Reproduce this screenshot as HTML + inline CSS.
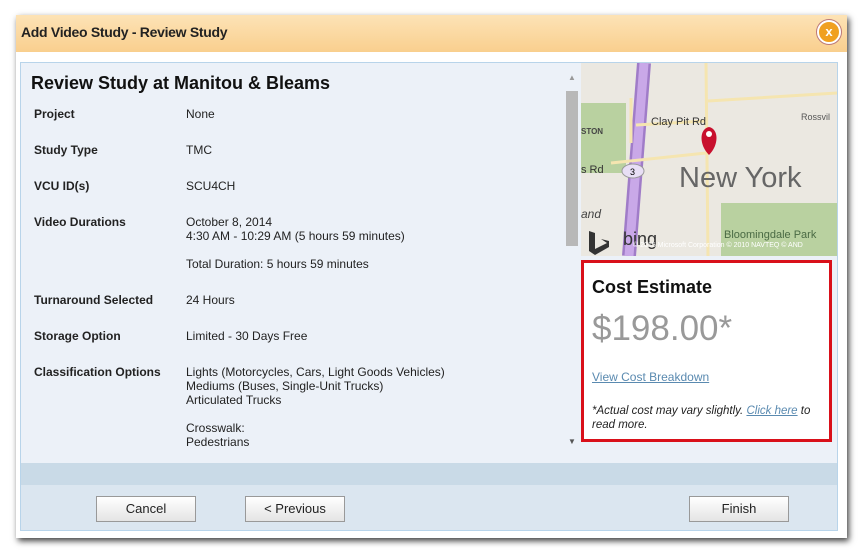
<!DOCTYPE html>
<html><head><meta charset="utf-8"><style>
body{margin:0;width:864px;height:553px;background:#fff;font-family:"Liberation Sans",sans-serif;position:relative;overflow:hidden}
.dlg{position:absolute;left:16px;top:15px;width:831px;height:523px;background:#fff;box-shadow:2px 3px 6px rgba(0,0,0,.75)}
.hd{position:absolute;left:0;top:0;width:831px;height:37px;background:linear-gradient(#fde3b6,#f9cf8e)}
.hd span{position:absolute;left:5px;top:9px;font-size:14px;font-weight:bold;color:#222;letter-spacing:-0.3px}
.x{position:absolute;left:801px;top:5px;width:20px;height:20px;border-radius:50%;background:#f0a020;border:2px solid #fff;box-shadow:0 0 0 1px #b77;color:#fff;font-size:13px;font-weight:bold;text-align:center;line-height:19px}
.pn{position:absolute;left:4px;top:47px;width:816px;height:467px;border:1px solid #b8d4ea;background:#ecf1f8}
.a{position:absolute;font-size:12px;color:#222}
.l{font-weight:bold;left:13px}
.v{left:165px}
.band{position:absolute;left:0;top:400px;width:816px;height:22px;background:#c9dae7}
.ft{position:absolute;left:0;top:422px;width:816px;height:45px;background:#dbe6f0}
.b{position:absolute;top:11px;width:98px;height:24px;border:1px solid #999;background:linear-gradient(#fff,#e4e4e4);font-size:13px;color:#222;text-align:center;line-height:24px}
.map{position:absolute;left:560px;top:0;width:256px;height:193px;background:#ebe8e1;overflow:hidden}
.cost{position:absolute;left:560px;top:197px;width:245px;height:176px;border:3px solid #d9101a;background:#fff}
</style></head><body>
<div class="dlg">
<div class="hd"><span>Add Video Study - Review Study</span><div class="x">x</div></div>
<div class="pn">
<div class="a" style="left:10px;top:10px;font-size:18px;font-weight:bold;color:#111">Review Study at Manitou &amp; Bleams</div>
<div class="a l" style="top:44px">Project</div><div class="a v" style="top:44px">None</div>
<div class="a l" style="top:80px">Study Type</div><div class="a v" style="top:80px">TMC</div>
<div class="a l" style="top:116px">VCU ID(s)</div><div class="a v" style="top:116px">SCU4CH</div>
<div class="a l" style="top:152px">Video Durations</div><div class="a v" style="top:152px;line-height:14px">October 8, 2014<br>4:30 AM - 10:29 AM (5 hours 59 minutes)<br><br>Total Duration: 5 hours 59 minutes</div>
<div class="a l" style="top:230px">Turnaround Selected</div><div class="a v" style="top:230px">24 Hours</div>
<div class="a l" style="top:266px">Storage Option</div><div class="a v" style="top:266px">Limited - 30 Days Free</div>
<div class="a l" style="top:302px">Classification Options</div><div class="a v" style="top:302px;line-height:14px">Lights (Motorcycles, Cars, Light Goods Vehicles)<br>Mediums (Buses, Single-Unit Trucks)<br>Articulated Trucks<br><br>Crosswalk:<br>Pedestrians</div>
<div style="position:absolute;left:545px;top:28px;width:12px;height:155px;background:#b8b8b8"></div>
<div class="a" style="left:547px;top:10px;font-size:8px;color:#999">▲</div>
<div class="a" style="left:547px;top:374px;font-size:8px;color:#555">▼</div>
<div class="map">
<svg width="256" height="193">
<rect x="0" y="40" width="45" height="70" fill="#b9d1a0"/>
<rect x="140" y="140" width="116" height="55" fill="#b9d1a0"/>
<path d="M63 0 L48 193" stroke="#a07cc8" stroke-width="14"/>
<path d="M63 0 L48 193" stroke="#c9a8e8" stroke-width="9"/>
<path d="M50 35 L50 80 M30 100 L125 90 M55 62 L125 58 M125 0 L127 193 M127 38 L256 30" stroke="#f5e5b0" stroke-width="3" fill="none"/>
<ellipse cx="52" cy="108" rx="11" ry="7" fill="#e8dff5" stroke="#999"/>
<text x="49" y="112" font-size="9" font-family="Liberation Sans">3</text>
<text x="70" y="62" font-size="11" fill="#333" font-family="Liberation Sans">Clay Pit Rd</text>
<text x="0" y="71" font-size="8" fill="#444" font-family="Liberation Sans" font-weight="bold">STON</text>
<text x="0" y="110" font-size="11" fill="#333" font-family="Liberation Sans">s Rd</text>
<text x="0" y="155" font-size="12" fill="#444" font-style="italic" font-family="Liberation Sans">and</text>
<text x="98" y="124" font-size="29" fill="#666" font-family="Liberation Sans">New York</text>
<text x="143" y="175" font-size="11" fill="#4a6a44" font-family="Liberation Sans">Bloomingdale Park</text>
<text x="220" y="57" font-size="9" fill="#555" font-family="Liberation Sans">Rossvil</text>
<text x="42" y="182" font-size="18" fill="#333" font-family="Liberation Sans">bing</text>
<path d="M8 168 L14 170 L14 186 L26 180 L20 176 L28 178 L28 184 L14 192 L8 188Z" fill="#333"/>
<text x="52" y="184" font-size="7" fill="#fff" font-family="Liberation Sans">© 2015 Microsoft Corporation  © 2010 NAVTEQ  © AND</text>
<path d="M128 92 C118 82 118 66 128 64 C138 66 138 82 128 92Z" fill="#c8102e"/>
<circle cx="128" cy="71" r="3" fill="#fff"/>
</svg></div>
<div class="cost">
<div class="a" style="left:8px;top:14px;font-size:18px;font-weight:bold;color:#111">Cost Estimate</div>
<div class="a" style="left:8px;top:46px;font-size:35px;color:#999">$198.00*</div>
<div class="a" style="left:8px;top:107px;color:#5a8ab0;text-decoration:underline">View Cost Breakdown</div>
<div class="a" style="left:8px;top:141px;font-style:italic;font-size:11.5px;line-height:14px;width:238px">*Actual cost may vary slightly. <span style="color:#5a8ab0;text-decoration:underline">Click here</span> to read more.</div>
</div>
<div class="band"></div>
<div class="ft">
<div class="b" style="left:75px">Cancel</div>
<div class="b" style="left:224px">&lt; Previous</div>
<div class="b" style="left:668px">Finish</div>
</div>
</div>
</div>
</body></html>
